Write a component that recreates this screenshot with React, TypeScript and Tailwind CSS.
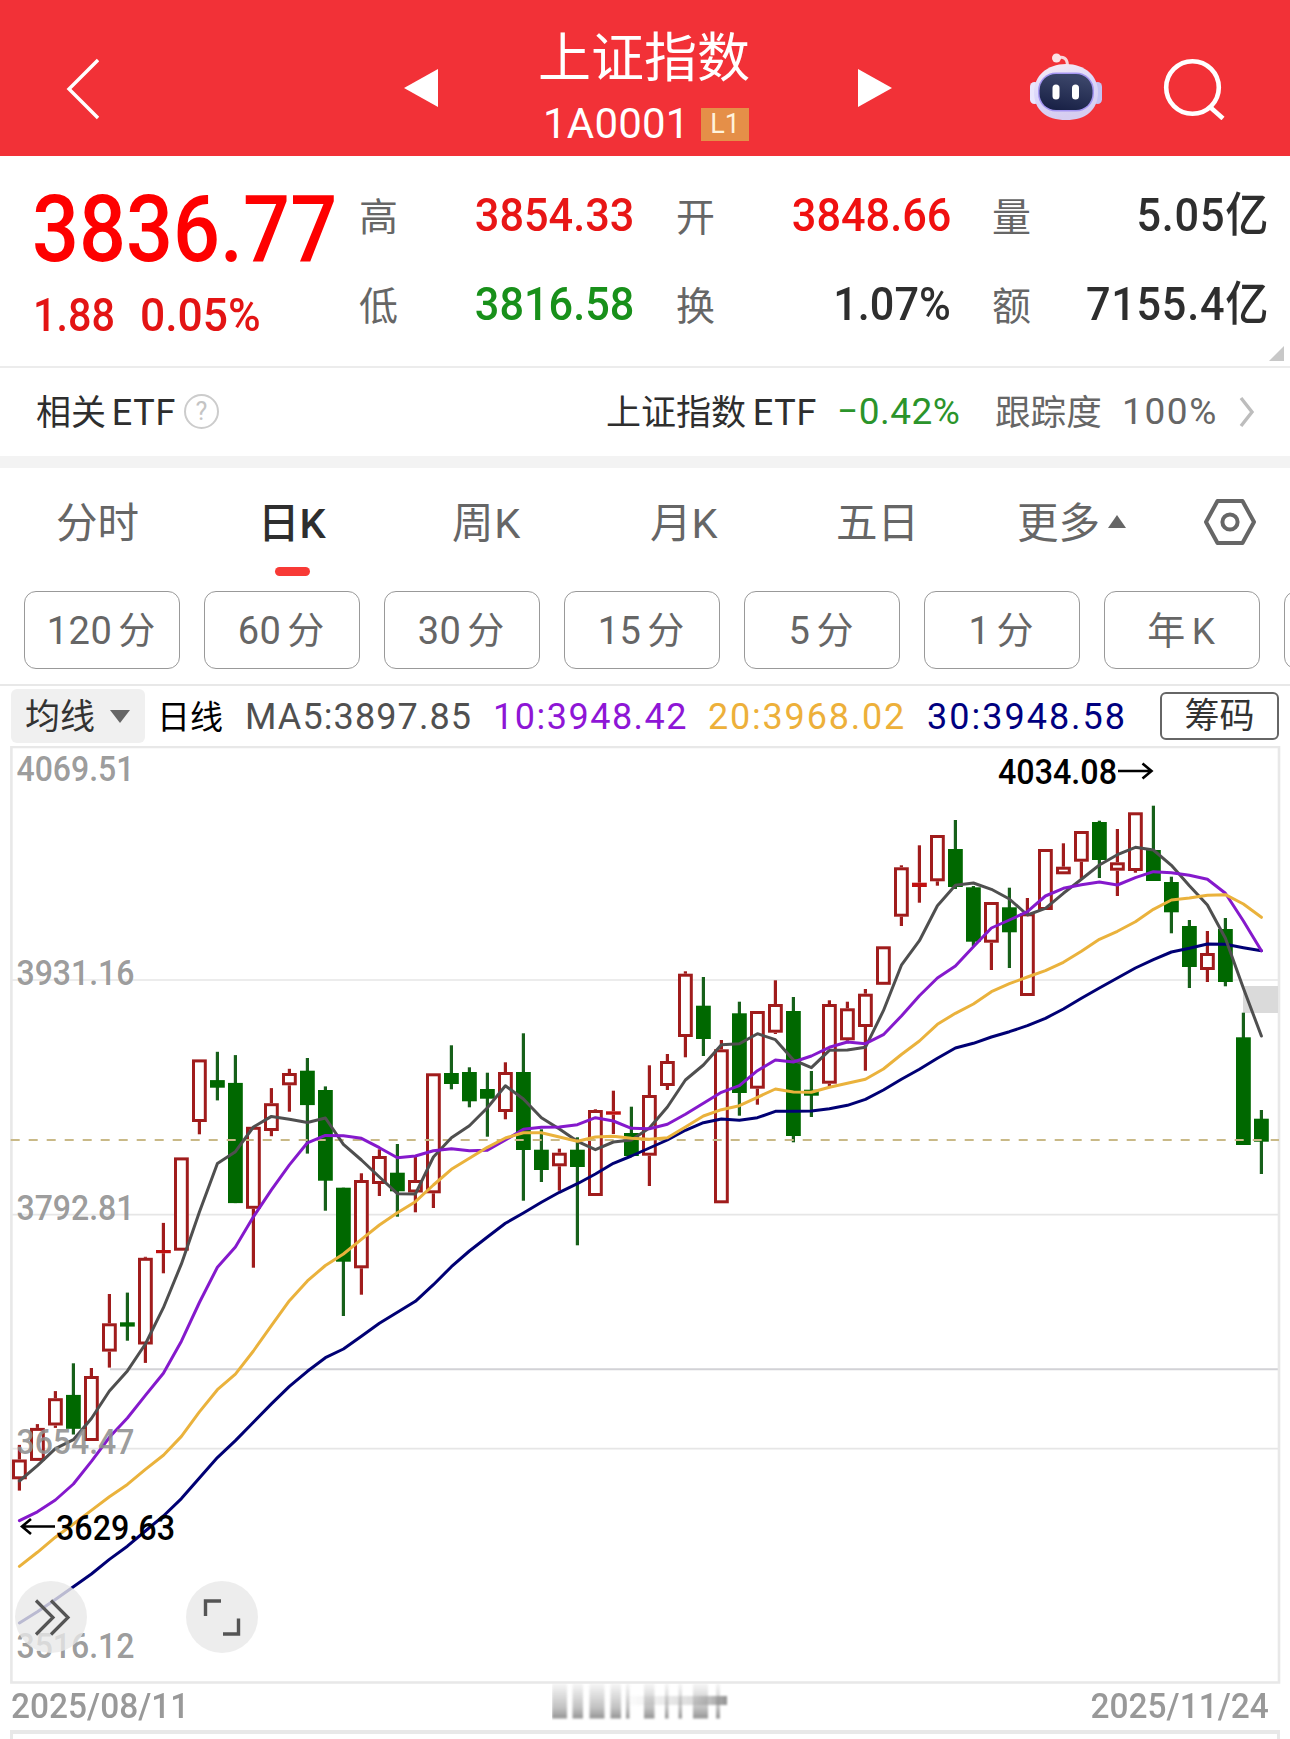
import type { ReactNode } from "react";
import clsx from "clsx";

type Candle = [up: 0 | 1, top: number, bottom: number, high: number, low: number];

const STEP = 18;
const FIRST_X = 19.4;
const xAt = (i: number) => FIRST_X + i * STEP;

// up, body top, body bottom, wick top, wick bottom
const CANDLES: Candle[] = [
  [1, 1459.5, 1479.3, 1444.9, 1490.6],
  [1, 1427.9, 1460.9, 1424.1, 1460.9],
  [1, 1398.2, 1425.5, 1391.1, 1427.9],
  [0, 1394.9, 1428.8, 1363.3, 1434.5],
  [1, 1376, 1441, 1368, 1441],
  [1, 1323.3, 1351.6, 1294, 1367.6],
  [0, 1322.3, 1326.6, 1292.6, 1340.7],
  [1, 1257.8, 1344.5, 1256.8, 1362.9],
  [1, 1250, 1253.2, 1222.9, 1273.3],
  [1, 1157.4, 1250.7, 1157.4, 1250.7],
  [1, 1059.4, 1122, 1059.4, 1134.3],
  [0, 1080.1, 1087.7, 1051.8, 1100.4],
  [0, 1082.9, 1203.1, 1055.1, 1203.1],
  [1, 1126.8, 1208.8, 1126.8, 1267.7],
  [1, 1103.2, 1131, 1088.1, 1136.2],
  [1, 1073, 1085.3, 1068.8, 1111.7],
  [0, 1070.7, 1105.1, 1058, 1153.6],
  [0, 1090, 1180.7, 1086.4, 1210.7],
  [0, 1187.7, 1261.7, 1187.7, 1316],
  [1, 1180, 1268.3, 1173.3, 1294.7],
  [1, 1156, 1184, 1149.3, 1196],
  [0, 1172.7, 1191.3, 1144, 1216.7],
  [1, 1180, 1192.5, 1156, 1212.3],
  [1, 1073.3, 1193.3, 1073.3, 1208],
  [0, 1073, 1084, 1045.3, 1089.3],
  [0, 1072, 1101.3, 1067.3, 1107.3],
  [0, 1089, 1098.7, 1072.7, 1136.7],
  [1, 1072, 1112, 1062.3, 1119.3],
  [0, 1072, 1150, 1033.3, 1200.7],
  [0, 1149.7, 1170, 1129.3, 1182],
  [1, 1152.7, 1166.3, 1148.7, 1190.7],
  [0, 1149.7, 1167, 1137.3, 1245.3],
  [1, 1110, 1196, 1109.3, 1196],
  [1, 1111.3, 1114.7, 1090.7, 1134],
  [0, 1133, 1156, 1106.7, 1156],
  [1, 1095, 1155.7, 1065.3, 1186],
  [1, 1061, 1086, 1054, 1090],
  [1, 973.7, 1037, 971.3, 1057.3],
  [0, 1005.7, 1039, 977, 1056],
  [1, 1049.3, 1203.3, 1040, 1203.3],
  [0, 1013.3, 1093, 1001.7, 1115.7],
  [1, 1011, 1088.7, 1011, 1104.7],
  [1, 1004, 1032.7, 980.3, 1034],
  [0, 1011, 1136, 997, 1142.3],
  [0, 1089.7, 1095.7, 1071, 1117],
  [1, 1004, 1083.7, 1000.3, 1086.7],
  [1, 1008.3, 1040.3, 1001.7, 1043.3],
  [1, 993.7, 1027, 989, 1070.7],
  [1, 946.3, 984.8, 946.3, 984.8],
  [1, 867.3, 916.7, 865.3, 926],
  [1, 882.7, 887, 845.3, 902.7],
  [1, 835, 881.3, 835, 885.7],
  [0, 849, 887, 820, 889],
  [0, 887.3, 941.7, 886, 946],
  [1, 902, 942.7, 902, 970],
  [0, 907.3, 932.3, 887.7, 968],
  [1, 913.3, 996, 898, 996],
  [1, 849, 910, 849, 910],
  [1, 866.7, 874.3, 843.3, 874.3],
  [1, 831, 861.7, 831, 878.7],
  [0, 822, 860, 820.7, 878],
  [1, 862.3, 870.7, 829, 896],
  [1, 812.3, 871, 812.3, 872.7],
  [0, 850, 881, 805.7, 881],
  [0, 882, 912.3, 876.7, 933.3],
  [0, 926, 967, 920, 988],
  [1, 953, 970, 931, 982],
  [0, 929, 982, 918, 986.3],
  [0, 1037.3, 1145, 1012.7, 1145],
  [0, 1118.7, 1141.7, 1110, 1174],
];

const AVERAGES = [
  {
    color: "#000074",
    ys: [
      1623, 1611.7, 1599.4, 1586.7, 1574, 1559.4, 1546.2, 1531, 1516, 1498.6, 1477.9, 1457.6, 1440.6, 1422.2,
      1403.9, 1386.4, 1371.3, 1357.7, 1349, 1336.3, 1323.3, 1312.3, 1301.3, 1284.7, 1266.7, 1251, 1237, 1223.3,
      1213, 1202.3, 1192.3, 1183.7, 1174, 1163.3, 1156, 1148, 1140, 1130.3, 1122.7, 1119, 1120.3, 1117.7, 1111.3,
      1111.3, 1111, 1108.7, 1105.3, 1099.3, 1090, 1079.3, 1069.3, 1058.3, 1048, 1043.3, 1037, 1031.7, 1025.7,
      1018.3, 1009, 998.3, 988, 978, 968, 959.7, 952, 948.3, 944, 944.3, 947.7, 950.7,
    ],
  },
  {
    color: "#4f4f4f",
    ys: [
      1481, 1465.6, 1448.6, 1439.7, 1418.5, 1391, 1370.9, 1344, 1307.7, 1263.9, 1212, 1163.5, 1151.7, 1127, 1116.4,
      1119.2, 1122.5, 1118, 1144.3, 1160, 1177, 1193.7, 1194, 1157, 1137.7, 1125.7, 1107.7, 1085.7, 1099, 1117.7,
      1129, 1141.3, 1149.7, 1142, 1140, 1128, 1107, 1080, 1065, 1044.7, 1043.7, 1033.7, 1039.7, 1060, 1067.7,
      1050.3, 1050, 1047.3, 1010.7, 965.2, 940.7, 905.7, 885.3, 883, 889.3, 899, 915, 908.3, 893.3, 879.3, 865,
      854.7, 847.3, 850, 865.3, 885.7, 905, 938.3, 988.3, 1036,
    ],
  },
  {
    color: "#8519cc",
    ys: [
      1520.7, 1511.8, 1500, 1484, 1461.4, 1437.3, 1418, 1395.4, 1373.2, 1341.2, 1302.5, 1267.2, 1246.9, 1216.8,
      1189.9, 1164.9, 1142.8, 1135.4, 1135.7, 1138.3, 1147.7, 1157.7, 1156, 1150.7, 1148.7, 1150.7, 1150.3, 1140,
      1129.3, 1127.3, 1127, 1124.7, 1117.7, 1121, 1128.3, 1128.7, 1124.3, 1114.3, 1103.3, 1092.3, 1085.7, 1070.7,
      1060, 1062, 1056, 1047.3, 1042, 1043.7, 1034.7, 1016, 995.7, 978, 966, 946.7, 928, 920, 911.7, 896, 888.3,
      884.7, 882, 885, 877.7, 871.7, 872.7, 875.3, 879.3, 893.3, 921, 950.7,
    ],
  },
  {
    color: "#eab23c",
    ys: [
      1566.4, 1552.3, 1537.2, 1524, 1510.4, 1496.7, 1484.4, 1469.4, 1455.2, 1436.4, 1411.9, 1389.7, 1374.2, 1351,
      1325.6, 1300.7, 1280.9, 1265.5, 1254, 1239.3, 1225, 1212.7, 1201.7, 1185, 1169.3, 1158.3, 1147.3, 1138,
      1132.7, 1132.7, 1137, 1141.3, 1137, 1136.3, 1138.3, 1139.3, 1137.7, 1127, 1116, 1109.7, 1105.7, 1097.3, 1089,
      1092, 1092.3, 1087.3, 1083.3, 1079.3, 1069, 1054.5, 1041, 1024.3, 1013.3, 1004, 991.7, 983.7, 977, 970.7,
      962.3, 951.3, 939.3, 931.3, 921.7, 909.3, 900, 898, 895.3, 894.7, 904, 917.3,
    ],
  },
];

const PRICE_LABELS = [
  { text: "4069.51", y: 781 },
  { text: "3931.16", y: 985 },
  { text: "3792.81", y: 1219.5 },
  { text: "3654.47", y: 1453.8 },
  { text: "3516.12", y: 1657.5 },
];

// remains of the half-hidden date under the chart
const SMEAR = [
  [552, 15], [572.5, 10.5], [589.5, 15], [610.5, 10.5], [626, 3.5], [644, 10.5], [665, 3.5], [678.5, 3.5], [693, 15], [716, 4],
];

const PERIODS = [
  ["120", "分"],
  ["60", "分"],
  ["30", "分"],
  ["15", "分"],
  ["5", "分"],
  ["1", "分"],
  ["年", "K"],
];

function Header() {
  return (
    <header className="flex h-[156px] items-center bg-[#f23137] text-white">
      <svg className="mt-[22px] ml-[65px] shrink-0" width="34" height="62" fill="none" stroke="#fff" strokeWidth="3.4">
        <path d="M33 2 L4 31 L33 60" />
      </svg>
      <svg className="mt-[20px] ml-[305px] shrink-0" width="34" height="38" fill="#fff">
        <path d="M0 19 L34 0 V38 Z" />
      </svg>
      <div className="ml-[100px] flex w-[212px] shrink-0 flex-col items-center pt-[21px]">
        <div className="text-[53px] leading-[64px] whitespace-nowrap">上证指数</div>
        <div className="mt-[7px] flex w-full items-center justify-between pr-px pl-[5px]">
          <span className="text-[42px] leading-[52px] tracking-[0.2px]">1A0001</span>
          <span className="flex h-[33px] w-[48px] items-center justify-center bg-[#e58f48] text-[27px] text-[#fff3dc]">
            L1
          </span>
        </div>
      </div>
      <svg className="mt-[20px] ml-[108px] shrink-0" width="34" height="38" fill="#fff">
        <path d="M34 19 L0 0 V38 Z" />
      </svg>
      <Robot />
      <svg className="mt-[22px] ml-[60px] shrink-0" width="62" height="62" fill="none" stroke="#fff" strokeWidth="4.6">
        <circle cx="29.5" cy="29.5" r="26.3" />
        <path d="M47 49 L60 60.5" />
      </svg>
    </header>
  );
}

function Robot() {
  return (
    <svg className="mt-[18px] ml-[137px] shrink-0" width="74" height="68" viewBox="0 0 74 68">
      <defs>
        <linearGradient id="shell" x1="0" y1="0" x2="0.3" y2="1">
          <stop offset="0" stopColor="#fbeef2" />
          <stop offset="0.5" stopColor="#dcd8fb" />
          <stop offset="1" stopColor="#d6cdf0" />
        </linearGradient>
        <linearGradient id="visor" x1="0.3" y1="0" x2="0" y2="1">
          <stop offset="0" stopColor="#3a4468" />
          <stop offset="1" stopColor="#151d42" />
        </linearGradient>
      </defs>
      <path d="M28 5 C34 3 38 5 38.5 12" fill="none" stroke="#f8d4da" strokeWidth="3" />
      <circle cx="27.5" cy="5" r="4.5" fill="#fbe3e6" />
      <rect x="1" y="29" width="9" height="22" rx="4.5" fill="#e9e6fd" />
      <rect x="64" y="29" width="9" height="22" rx="4.5" fill="#c4c2f3" />
      <path
        d="M37 11 C56 11 69 23 69 39 C69 57 57 67 37 67 C17 67 5 57 5 39 C5 23 18 11 37 11 Z"
        fill="url(#shell)"
      />
      <rect x="9" y="19.5" width="56" height="39" rx="18" fill="#a596f2" />
      <rect x="10.5" y="21" width="53" height="36" rx="16.5" fill="url(#visor)" />
      <rect x="23.5" y="31.5" width="7" height="15" rx="3.5" fill="#fff" />
      <rect x="43" y="31.5" width="7" height="15" rx="3.5" fill="#fff" />
    </svg>
  );
}

function Stat({ label, className, children }: { label: string; className: string; children: ReactNode }) {
  return (
    <div className="flex h-[89px] items-center justify-between">
      <span className="pt-[5px] text-[39px] text-[#666]">{label}</span>
      <span className={clsx("origin-right scale-x-[0.92] text-[47px] font-medium whitespace-nowrap", className)}>
        {children}
      </span>
    </div>
  );
}

function Quote() {
  return (
    <section className="relative flex h-[212px] border-b-2 border-[#ececec] pl-[31px]">
      <div className="w-[328px] shrink-0 pt-[22px] whitespace-nowrap">
        <div className="origin-left scale-x-[0.895] pl-px text-[92.5px] leading-[104px] font-medium text-[#fe0000]">3836.77</div>
        <div className="mt-[9px] flex pl-[2px] text-[47px] leading-[48px] font-medium text-[#e31414]">
          <span className="w-[107px] origin-left scale-x-[0.88]">1.88</span>
          <span className="origin-left scale-x-[0.945]">0.05%</span>
        </div>
      </div>
      <div className="w-[275px] shrink-0 pt-[15px]">
        <Stat label="高" className="text-[#e81616]">3854.33</Stat>
        <Stat label="低" className="text-[#18901a]">3816.58</Stat>
      </div>
      <div className="ml-[42px] w-[275px] shrink-0 pt-[15px]">
        <Stat label="开" className="text-[#f01010]">3848.66</Stat>
        <Stat label="换" className="text-[#2e2e2e]">1.07%</Stat>
      </div>
      <div className="ml-[41px] w-[277px] shrink-0 pt-[15px]">
        <Stat label="量" className="text-[#2e2e2e]"><span className="tracking-[0.8px]">5.05亿</span></Stat>
        <Stat label="额" className="text-[#2e2e2e]"><span className="tracking-[0.8px]">7155.4亿</span></Stat>
      </div>
      <svg className="absolute right-[6px] bottom-[5px]" width="15" height="15" fill="#c8c8c8">
        <path d="M15 0 V15 H0 Z" />
      </svg>
    </section>
  );
}

function EtfRow() {
  return (
    <section className="flex h-[100px] items-center border-b-[12px] border-[#f3f3f3] pl-[36px] text-[35px] whitespace-nowrap text-[#2e2e2e]">
      <span className="w-[148px] pt-[3px]">相关 <span className="-ml-[3px] text-[36px] tracking-[0.8px]">ETF</span></span>
      <span className="-mt-px flex size-[35px] items-center justify-center rounded-full border-[2.5px] border-[#ccc] text-[25px] text-[#c4c4c4]">
        ?
      </span>
      <span className="ml-[387px] w-[231px] pt-[3px]">上证指数 <span className="-ml-[2px] text-[36px] tracking-[0.8px]">ETF</span></span>
      <span className="w-[158px] text-[37px] tracking-[0.5px] text-[#2b942b]">−0.42%</span>
      <span className="w-[127px] pt-[3px] text-[35.6px] text-[#666]">跟踪度</span>
      <span className="w-[117px] text-[37px] tracking-[1.6px] text-[#666]">100%</span>
      <svg width="16" height="32" fill="none" stroke="#bdbdbd" strokeWidth="3.4">
        <path d="M2 2 L13 16 L2 30" />
      </svg>
    </section>
  );
}

function Tabs() {
  return (
    <nav className="flex h-[123px] items-start pt-[26px] text-[41.5px] leading-[60px] whitespace-nowrap text-[#666]">
      <span className="ml-[56px] w-[202px]">分时</span>
      <span className="flex w-[194px] flex-col font-medium text-[#2e2e2e]">
        日K
        <span className="mt-[13px] ml-[17px] h-[9px] w-[35px] rounded-full bg-[#f83a36]" />
      </span>
      <span className="w-[198px] tracking-[0.8px]">周K</span>
      <span className="w-[186px]">月K</span>
      <span className="w-[181px]">五日</span>
      <span className="flex w-[187px] items-center">
        更多
        <svg className="-mt-[5px] ml-[8px]" width="18" height="13" fill="#666">
          <path d="M9 0 L18 13 H0 Z" />
        </svg>
      </span>
      <svg className="mt-[4px]" width="52" height="48" fill="none" stroke="#666" strokeWidth="4">
        <path d="M13.5 3 H38.5 L50 24 L38.5 45 H13.5 L2 24 Z" strokeLinejoin="round" />
        <circle cx="26" cy="24" r="7.6" />
      </svg>
    </nav>
  );
}

function Periods() {
  return (
    <div className="flex h-[95px] gap-[24px] overflow-hidden border-b-2 border-[#e8e8e8] pl-[24px]">
      {PERIODS.map(([a, b]) => (
        <button
          key={a}
          className="flex h-[78px] w-[156px] shrink-0 items-center justify-center gap-[6px] rounded-xl border-[1.5px] border-[#999] pt-[3px] pr-[2px] text-[37px] text-[#666]"
        >
          <span className="text-[38px] tracking-[0.5px]">{a}</span>
          <span>{b}</span>
        </button>
      ))}
      <span className="h-[78px] w-[156px] shrink-0 rounded-xl border-[1.5px] border-[#999]" />
    </div>
  );
}

function AverageBar() {
  return (
    <div className="flex h-[60px] items-center pl-[11px] text-[36px] whitespace-nowrap">
      <span className="flex h-[54px] w-[134px] items-center rounded-md bg-[#f0f0f0] pt-[4px] pl-[14px] text-[35px] text-[#333]">
        均线
        <svg className="-mt-[3px] ml-[15px]" width="20" height="13" fill="#666">
          <path d="M0 0 H20 L10 13 Z" />
        </svg>
      </span>
      <span className="ml-[12px] w-[88px] pt-[3px] text-[33px] text-black">日线</span>
      <span className="w-[248px] pt-px tracking-[1.1px] text-[#505050]">MA5:3897.85</span>
      <span className="w-[215px] pt-px tracking-[1.5px] text-[#8e16d6]">10:3948.42</span>
      <span className="w-[219px] pt-px tracking-[1.8px] text-[#edb03a]">20:3968.02</span>
      <span className="w-[233px] pt-px tracking-[2px] text-[#000080]">30:3948.58</span>
      <button className="h-[48px] w-[119px] rounded-md border-2 border-[#666] pt-[2px] text-[35px] leading-[40px] text-[#333]">
        筹码
      </button>
    </div>
  );
}

function Chart() {
  return (
    <div className="relative">
      <svg className="block" width="1290" height="938" viewBox="0 746 1290 938">
        <g stroke="#e6e6e6" strokeWidth="1.6">
          <path d="M12 980 H1279 M12 1214.6 H1279 M12 1448.6 H1279" />
        </g>
        <path d="M110 1369.3 H1279" stroke="#d2d2d6" strokeWidth="2" />
        <path d="M11.4 1682.5 V747 H1279 V1682.5 Z" fill="none" stroke="#e8e8e8" strokeWidth="2.6" />
        <rect x="1243" y="986" width="35" height="27" fill="#dadada" />

        {CANDLES.map(([up, top, bottom, high, low], i) => {
          const x = xAt(i);
          const h = bottom - top;
          return up ? (
            <g key={i} fill="#a01c1c">
              {high < top && <rect x={x - 1.6} y={high} width="3.2" height={top - high} />}
              {low > bottom && <rect x={x - 1.6} y={bottom} width="3.2" height={low - bottom} />}
              {h < 6 ? (
                <rect x={x - 7.4} y={top} width="14.8" height={h} fill="#c01010" />
              ) : (
                <rect x={x - 5.9} y={top + 1.5} width="11.8" height={h - 3} fill="#fff" stroke="#a01c1c" strokeWidth="3" />
              )}
            </g>
          ) : (
            <g key={i}>
              <rect x={x - 1.6} y={high} width="3.2" height={low - high} fill="#17601a" />
              <rect x={x - 7.4} y={top} width="14.8" height={h} fill="#006800" />
            </g>
          );
        })}

        <path d="M10.7 1140 H1279" stroke="#c9b987" strokeWidth="1.8" strokeDasharray="9 9" />

        {AVERAGES.map(({ color, ys }) => (
          <polyline
            key={color}
            points={ys.map((y, i) => `${xAt(i)},${y}`).join(" ")}
            fill="none"
            stroke={color}
            strokeWidth="3"
            strokeLinejoin="round"
            strokeLinecap="round"
          />
        ))}

        <g fill="#8f8f8f" fillOpacity="0.9" fontSize="34.5" fontWeight="500">
          {PRICE_LABELS.map(({ text, y }) => (
            <text key={text} x="16.5" y={y} textLength="118" lengthAdjust="spacingAndGlyphs">
              {text}
            </text>
          ))}
        </g>

        <g fontSize="34.5" fontWeight="500">
          <text x="998" y="784" textLength="119" lengthAdjust="spacingAndGlyphs">4034.08</text>
          <text x="56" y="1539.5" textLength="119" lengthAdjust="spacingAndGlyphs">3629.63</text>
        </g>
        <g fill="none" stroke="#000" strokeWidth="2.6">
          <path d="M1118 771 H1151 M1142.5 763.5 L1151.5 771 L1142.5 778.5" />
          <path d="M55 1526.5 H22 M31 1519 L22 1526.5 L31 1534" />
        </g>
      </svg>
      <button className="absolute top-[835px] left-[15px] size-[72px] rounded-full bg-[#e9e9e9]/80">
        <svg width="72" height="72" fill="none" stroke="#555" strokeWidth="3.2">
          <path d="M21 19.5 L38 36.5 L21 53.5 M36 19.5 L53 36.5 L36 53.5" />
        </svg>
      </button>
      <button className="absolute top-[835px] left-[186px] size-[72px] rounded-full bg-[#e9e9e9]/80">
        <svg width="72" height="72" fill="none" stroke="#555" strokeWidth="3.4">
          <path d="M19.5 35 V20 H35 M37 53 H52.5 V37.5" />
        </svg>
      </button>
    </div>
  );
}

function Dates() {
  return (
    <div className="flex h-[46px] items-center pr-[21px] pl-[11px] text-[34.5px] leading-[42px] font-medium text-[#999]">
      <span className="w-[541px] pb-[3px]">
        <span className="inline-block origin-left scale-x-[0.97]">2025/08/11</span>
      </span>
      <svg className="-mt-[2px] self-start" width="178" height="48" viewBox="552 1682 178 48">
        <defs>
          <linearGradient id="fadeDown" x1="0" y1="0" x2="0" y2="1">
            <stop offset="0" stopColor="#999" stopOpacity="0.05" />
            <stop offset="0.7" stopColor="#999" stopOpacity="0.6" />
            <stop offset="1" stopColor="#8e8e8e" stopOpacity="0.95" />
          </linearGradient>
          <linearGradient id="fadeRight" x1="0" y1="0" x2="1" y2="0">
            <stop offset="0" stopColor="#999" stopOpacity="0" />
            <stop offset="0.7" stopColor="#999" stopOpacity="0.35" />
            <stop offset="1" stopColor="#808080" stopOpacity="0.85" />
          </linearGradient>
          <filter id="soft" x="-10%" y="-10%" width="120%" height="120%">
            <feGaussianBlur stdDeviation="0.8" />
          </filter>
        </defs>
        <rect x="552" y="1682" width="174" height="3" fill="#fff" />
        <g filter="url(#soft)">
          {SMEAR.map(([x, w]) => (
            <rect key={x} x={x} y="1682" width={w} height="36.5" fill="url(#fadeDown)" />
          ))}
          <rect x="622" y="1696" width="105" height="9" fill="url(#fadeRight)" />
        </g>
      </svg>
      <span className="ml-auto origin-right scale-x-[0.97] pb-[3px]">2025/11/24</span>
    </div>
  );
}

export default function App() {
  return (
    <div className="h-[1739px] w-[1290px] overflow-hidden bg-white font-['Roboto','Noto_Sans_CJK_SC',sans-serif]">
      <Header />
      <Quote />
      <EtfRow />
      <Tabs />
      <Periods />
      <AverageBar />
      <Chart />
      <Dates />
      <div className="mr-[10px] ml-[10px] h-[9px] border-x-[3px] border-t-4 border-[#e8e8e8]" />
    </div>
  );
}
